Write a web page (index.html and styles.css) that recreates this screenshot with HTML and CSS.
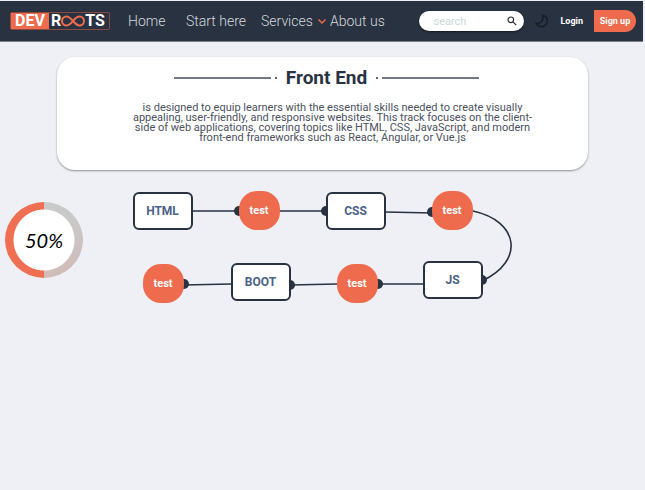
FILE: index.html
```html
<!DOCTYPE html>
<html lang="en">
<head>
<meta charset="utf-8">
<title>DevRoots - Front End</title>
<link rel="stylesheet" href="styles.css">
</head>
<body>
<header class="topbar">
  <a class="logo" href="#"><span class="logo-dev">DEV</span><span class="logo-roots">R<svg class="logo-loop" viewBox="0 0 24 12" aria-hidden="true"><path d="M12 6C9 2.500 7.500 1.500 5.500 1.500a4.500 4.500 0 0 0 0 9C8.500 10.500 10 8.500 12 6s3.500-4.500 6.500-4.500a4.500 4.500 0 0 1 0 9C16.500 10.500 15 9.500 12 6z"/></svg>TS</span></a>
  <nav class="nav">
    <a href="#">Home</a>
    <a href="#">Start here</a>
    <a href="#">Services<svg class="chevron" viewBox="0 0 10 7" aria-hidden="true"><path d="M1.500 1.500 5 5l3.500-3.500"/></svg></a>
    <a href="#">About us</a>
  </nav>
  <form class="search">
    <input type="text" placeholder="search" aria-label="Search">
    <button type="button" aria-label="Submit search"><svg viewBox="0 0 10 10" aria-hidden="true"><circle cx="3.800" cy="3.800" r="2.800"/><path d="M5.900 5.900 9.200 9.200"/></svg></button>
  </form>
  <button class="theme" type="button" aria-label="Dark mode"><svg viewBox="0 0 14 14" aria-hidden="true"><path d="M7.500 1.200A5.800 5.800 0 1 1 1.200 9.200C5.500 10.200 9.300 6 7.500 1.200z"/></svg></button>
  <a class="login" href="#">Login</a>
  <a class="signup" href="#">Sign up</a>
</header>
<main>
  <section class="card">
    <div class="heading"><span class="rule"></span><span class="dot"></span><h1>Front End</h1><span class="dot"></span><span class="rule"></span></div>
    <p>is designed to equip learners with the essential skills needed to create visually<br>appealing, user-friendly, and responsive websites. This track focuses on the client-<br>side of web applications, covering topics like HTML, CSS, JavaScript, and modern<br>front-end frameworks such as React, Angular, or Vue.js</p>
  </section>
  <section class="track">
    <div class="progress"><span>50%</span></div>
    <div class="roadmap">
      <svg class="wires" viewBox="0 0 380 113" aria-hidden="true">
        <path d="M59 20H106M147 20H194M252 21 300 22M340 20C386 30 392 70 349 90M290 93 245 93M204 93 157 94M98 93 50 94"/>
        <g><circle cx="106" cy="20" r="5"/><circle cx="193" cy="20" r="5"/><circle cx="299" cy="21" r="5"/><circle cx="349" cy="89" r="5"/><circle cx="245" cy="93" r="5"/><circle cx="157" cy="94" r="5"/><circle cx="51" cy="93" r="5"/></g>
      </svg>
      <a class="topic html" href="#">HTML</a>
      <a class="test first" href="#">test</a>
      <a class="topic css" href="#">CSS</a>
      <a class="test second" href="#">test</a>
      <a class="topic js" href="#">JS</a>
      <a class="test third" href="#">test</a>
      <a class="topic boot" href="#">BOOT</a>
      <a class="test fourth" href="#">test</a>
    </div>
  </section>
</main>
</body>
</html>
```
FILE: styles.css
```css
* { box-sizing: border-box; }
body {
  margin: 0;
  padding-top: 1px;
  background: #eff0f5;
  color: #293241;
  font-family: Roboto, "Liberation Sans", sans-serif;
}
a { color: inherit; text-decoration: none; }
button { padding: 0; border: 0; background: none; }
svg { display: block; fill: none; }

.topbar {
  display: flex;
  align-items: center;
  height: 41px;
  margin-right: 2px;
  padding: 0 7px 0 10px;
  background: #293241;
  border-bottom: 1px solid #7d818b;
  color: #fff;
}
.logo {
  display: flex;
  flex: none;
  height: 18px;
  margin-right: 18px;
  border: 1px solid #8b4a40;
  border-radius: 2px;
  font-size: 16px;
  font-weight: 700;
  line-height: 16px;
}
.logo-dev { width: 38px; background: #ee6c4d; text-align: center; }
.logo-roots { display: flex; align-items: center; width: 60px; padding-left: 2px; }
.logo-loop { width: 24px; height: 12px; stroke: #ee6c4d; stroke-width: 2; }
.nav {
  display: grid;
  grid-template-columns: 58px 75px 69px auto;
  color: #d5d8de;
  font-size: 14px;
  font-weight: 300;
  white-space: nowrap;
}
.nav a { display: flex; align-items: center; }
.chevron { width: 10px; height: 7px; margin-left: 4px; stroke: #ee6c4d; stroke-width: 1.5; }
.search {
  display: flex;
  align-items: center;
  width: 105px;
  height: 20px;
  margin-left: auto;
  padding: 0 7px 0 14px;
  border-radius: 10px;
  background: #fff;
  box-shadow: 0 1px 2px #0008;
}
.search input {
  flex: 1;
  min-width: 0;
  padding: 0;
  border: 0;
  outline: 0;
  background: none;
  font: 11px Roboto, sans-serif;
}
.search input::placeholder { color: #cad8d9; }
.search svg { width: 10px; height: 10px; stroke: #293033; stroke-width: 1.2; }
.theme { width: 14px; margin: 0 11px; }
.theme svg { stroke: #161c26; stroke-width: 1.4; }
.login { font-size: 9px; font-weight: 700; margin-right: 11px; }
.signup {
  width: 42px;
  height: 22px;
  border-radius: 0 11px 11px 0;
  background: #ee6c4d;
  font-size: 9px;
  font-weight: 700;
  line-height: 22px;
  text-align: center;
}

.card {
  width: 82.3%;
  margin: 15px auto 0;
  padding: 11px 0 27px;
  border-radius: 18px;
  background: #fff;
  box-shadow: 0 1px 2px #0006;
  text-align: center;
}
.heading { display: flex; align-items: center; justify-content: center; gap: 4px; padding-left: 8px; }
.heading h1 { margin: 0 5px; font-size: 19px; font-weight: 700; line-height: 20px; }
.rule { width: 97px; height: 2px; background: #747986; }
.dot { width: 2px; height: 2px; border-radius: 1px; background: #293241; }
.card p { margin: 15px 0 0; padding-left: 20px; color: #4a5160; font-size: 11px; line-height: 10px; }

.track {
  display: grid;
  grid-template-columns: 1fr 380px 1fr;
  padding: 21px 0 0;
}
.progress {
  display: flex;
  align-items: center;
  justify-content: center;
  width: 78px;
  height: 76px;
  margin: 11px 0 0 5px;
  border-radius: 50%;
  background:
    radial-gradient(circle, #fff 30px, transparent 31px),
    linear-gradient(90deg, #ee6f51 50%, transparent 50%),
    linear-gradient(160deg, #c9c9c9 40%, #d1b9b3);
  color: #000;
  font-family: Lato, sans-serif;
  font-size: 20px;
  font-style: italic;
  font-weight: 400;
}
.roadmap { position: relative; height: 113px; }
.wires { width: 380px; height: 113px; overflow: visible; }
.wires path { stroke: #293241; stroke-width: 1.6; }
.wires g { fill: #293241; }
.topic, .test {
  position: absolute;
  display: flex;
  align-items: center;
  justify-content: center;
  font-weight: 700;
}
.topic {
  width: 60px;
  height: 38px;
  border: 2px solid #293241;
  border-radius: 6px;
  background: #fff;
  color: #4a6288;
  font-size: 12px;
}
.test {
  width: 41px;
  height: 39px;
  border-radius: 18px;
  background: #ee6c4d;
  color: #fff;
  font-size: 11px;
}
.html { left: 0; top: 1px; }
.css { left: 193px; top: 1px; }
.js { left: 290px; top: 70px; }
.boot { left: 98px; top: 72px; }
.first { left: 106px; top: 0; }
.second { left: 299px; top: 0; }
.third { left: 204px; top: 73px; }
.fourth { left: 10px; top: 73px; }
```
